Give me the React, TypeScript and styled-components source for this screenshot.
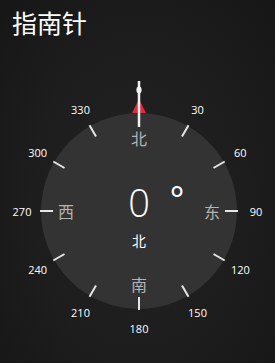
import React from "react";
import styled, { createGlobalStyle } from "styled-components";

const GlobalStyle = createGlobalStyle`
  html, body {
    margin: 0;
    padding: 0;
    background: #1c1c1c;
  }
  * {
    box-sizing: border-box;
  }
`;

const Screen = styled.div`
  width: 275px;
  height: 363px;
  overflow: hidden;
  display: flex;
  flex-direction: column;
  background: radial-gradient(ellipse at 50% 55%, #222222 0%, #1d1d1d 55%, #161616 100%);
  font-family: "Open Sans", "Noto Sans CJK SC", sans-serif;
  color: #ffffff;
`;

const Title = styled.h1`
  margin: 0;
  height: 64px;
  padding: 5px 0 0 12px;
  font-family: "Noto Sans CJK SC", sans-serif;
  font-size: 25px;
  font-weight: 400;
  line-height: 34px;
  letter-spacing: 0;
`;

const DialWrap = styled.div`
  position: relative;
  width: 275px;
  height: 299px;
`;

const Readout = styled.div`
  position: absolute;
  left: 0;
  width: 278px;
  top: 116px;
  display: flex;
  flex-direction: column;
  align-items: center;
`;

const Value = styled.div`
  position: relative;
  font-family: "Open Sans", sans-serif;
  font-weight: 300;
  font-size: 38px;
  line-height: 44px;
`;

const Degree = styled.span`
  position: absolute;
  left: calc(100% + 20px);
  top: -3px;
  font-size: 34px;
  font-weight: 400;
`;

const Heading = styled.div`
  margin-top: 7px;
  font-family: "Noto Sans CJK SC", sans-serif;
  font-size: 14px;
  line-height: 18px;
`;

const CX = 139;
const CY = 147;

const polar = (deg: number, r: number) => {
  const a = (deg * Math.PI) / 180;
  return { x: CX + r * Math.sin(a), y: CY - r * Math.cos(a) };
};

const degrees = [30, 60, 90, 120, 150, 180, 210, 240, 270, 300, 330];
const cardinals = [
  { deg: 0, label: "北" },
  { deg: 90, label: "东" },
  { deg: 180, label: "南" },
  { deg: 270, label: "西" },
];

const Dial = () => (
  <svg width="275" height="299" viewBox="0 0 275 299">
    <defs>
      <filter id="soft" x="-50%" y="-50%" width="200%" height="200%">
        <feGaussianBlur stdDeviation="0.7" />
      </filter>
    </defs>
    <circle cx={CX} cy={CY} r={98} fill="#333333" />
    {degrees.map((d) => {
      const a = polar(d, 86);
      const b = polar(d, 99);
      return (
        <line
          key={`t${d}`}
          x1={a.x}
          y1={a.y}
          x2={b.x}
          y2={b.y}
          stroke="#e6e6e6"
          strokeWidth={2}
        />
      );
    })}
    {degrees.map((d) => {
      const p = polar(d, 117);
      return (
        <text
          key={`l${d}`}
          x={p.x}
          y={p.y}
          fill="#ffffff"
          fontSize="11"
          fontFamily="'Open Sans', sans-serif"
          textAnchor="middle"
          dominantBaseline="central"
        >
          {d}
        </text>
      );
    })}
    {cardinals.map((c) => {
      const p = polar(c.deg, 73);
      return (
        <text
          key={c.label}
          x={p.x}
          y={p.y}
          fill="#b4b4b4"
          fontSize="16"
          fontFamily="'Noto Sans CJK SC', sans-serif"
          textAnchor="middle"
          dominantBaseline="central"
        >
          {c.label}
        </text>
      );
    })}
    <polygon
      points={`${CX},${CY - 112} ${CX - 7},${CY - 98} ${CX + 7},${CY - 98}`}
      fill="#e02a3c"
      filter="url(#soft)"
    />
    <line x1={CX} y1={CY - 130} x2={CX} y2={CY - 84} stroke="#f2f2f2" strokeWidth={2.5} />
    <ellipse cx={CX} cy={CY - 121} rx={2.6} ry={3.4} fill="#f2f2f2" />
  </svg>
);

export default function App() {
  return (
    <>
      <GlobalStyle />
      <Screen>
        <Title>指南针</Title>
        <DialWrap>
          <Dial />
          <Readout>
            <Value>
              0<Degree>°</Degree>
            </Value>
            <Heading>北</Heading>
          </Readout>
        </DialWrap>
      </Screen>
    </>
  );
}
